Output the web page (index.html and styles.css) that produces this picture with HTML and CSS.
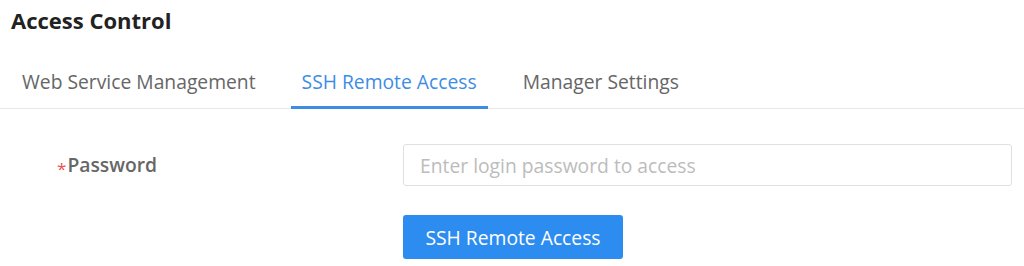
FILE: index.html
```html
<!DOCTYPE html>
<html lang="en">
<head>
  <meta charset="UTF-8">
  <meta name="viewport" content="width=device-width, initial-scale=1.0">
  <title>Access Control</title>
  <link rel="stylesheet" href="styles.css">
</head>
<body>
  <h1 class="page-title">Access Control</h1>
  <div class="tabs">
    <div class="tab">Web Service Management</div>
    <div class="tab active">SSH Remote Access</div>
    <div class="tab">Manager Settings</div>
  </div>
  <form class="form">
    <div class="form-row">
      <label class="label" for="password"><span class="required">*</span>Password</label>
      <input id="password" class="input" type="password" placeholder="Enter login password to access">
    </div>
    <div class="form-row">
      <span></span>
      <button type="button" class="btn-primary">SSH Remote Access</button>
    </div>
  </form>
</body>
</html>
```

FILE: styles.css
```css
body {
  margin: 0;
  font-family: 'Open Sans', sans-serif;
  background: #fff;
  color: #333;
}
.page-title {
  margin: 0;
  padding: 5px 11px 0;
  font-size: 22px;
  line-height: 30px;
  font-weight: 700;
  color: #222;
}
.tabs {
  display: flex;
  gap: 24px;
  margin-top: 34px;
  border-bottom: 1px solid #e8e8e8;
}
.tab {
  padding: 0 11px 11px;
  font-size: 19.3px;
  line-height: 26px;
  color: #666;
  border-bottom: 3px solid transparent;
  margin-bottom: -1px;
}
.tab:first-child {
  margin-left: 11px;
}
.tab.active {
  color: #3d8de4;
  border-bottom-color: #3d8de4;
}
.form {
  padding: 35px 12px 0 57px;
}
.form-row {
  display: grid;
  grid-template-columns: 346px 1fr;
  align-items: center;
}
.form-row + .form-row {
  margin-top: 29px;
}
.label {
  font-size: 19.3px;
  font-weight: 600;
  color: #666;
}
.required {
  color: #f04d4d;
  font-weight: 400;
  font-size: 17px;
  margin-right: 1px;
  vertical-align: -3px;
}
.input {
  height: 42px;
  box-sizing: border-box;
  border: 1px solid #e0e0e0;
  border-radius: 3px;
  padding: 0 16px;
  font-family: 'Open Sans', sans-serif;
  font-size: 19.3px;
  color: #333;
  outline: none;
}
.input::placeholder {
  color: #bcbcbc;
}
.btn-primary {
  justify-self: start;
  width: 220px;
  height: 44px;
  border: none;
  border-radius: 3px;
  background: #2d8cf0;
  color: #fff;
  font-family: 'Open Sans', sans-serif;
  font-size: 19.3px;
  cursor: pointer;
}
```
